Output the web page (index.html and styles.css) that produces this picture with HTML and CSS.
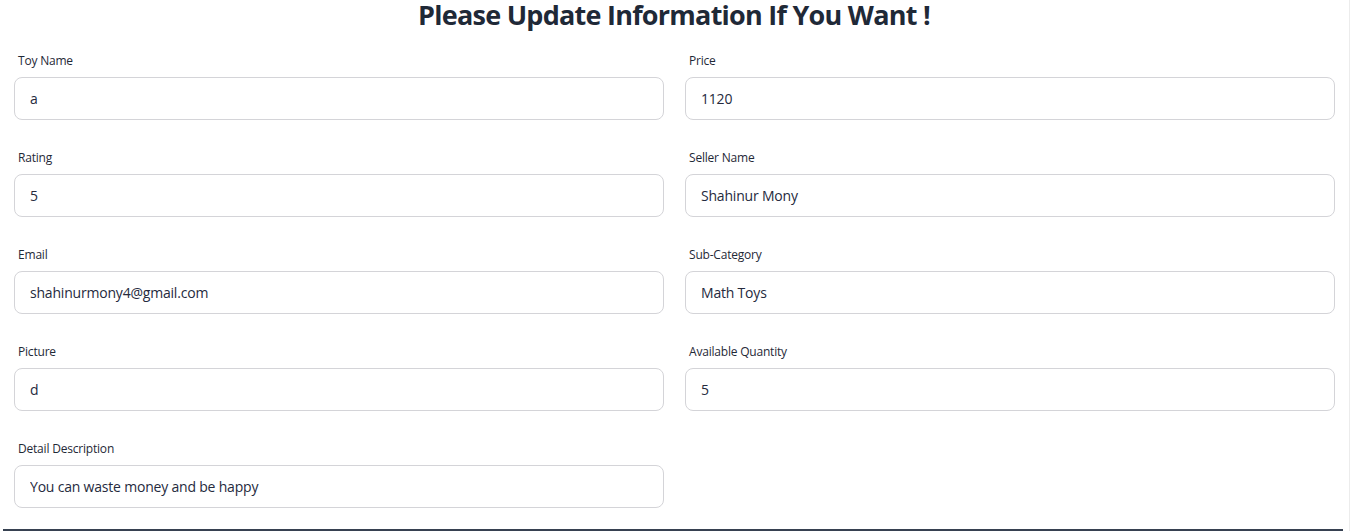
FILE: index.html
```html
<!DOCTYPE html>
<html>
<head>
<meta charset="utf-8">
<link rel="stylesheet" href="styles.css">
</head>
<body>
<div class="page">
  <h1 class="title">Please Update Information If You Want !</h1>
  <form class="form">
    <div class="field"><label class="label">Toy Name</label><input class="input" value="a"></div>
    <div class="field"><label class="label">Price</label><input class="input" value="1120"></div>
    <div class="field"><label class="label">Rating</label><input class="input" value="5"></div>
    <div class="field"><label class="label">Seller Name</label><input class="input" value="Shahinur Mony"></div>
    <div class="field"><label class="label">Email</label><input class="input" value="shahinurmony4@gmail.com"></div>
    <div class="field"><label class="label">Sub-Category</label><input class="input" value="Math Toys"></div>
    <div class="field"><label class="label">Picture</label><input class="input" value="d"></div>
    <div class="field"><label class="label">Available Quantity</label><input class="input" value="5"></div>
    <div class="field"><label class="label">Detail Description</label><input class="input" value="You can waste money and be happy"></div>
  </form>
  <div class="footer"></div>
</div>
</body>
</html>
```
FILE: styles.css
```css
* { box-sizing: border-box; }
html, body { margin: 0; padding: 0; background: #fff; }
body { font-family: "Open Sans", "Noto Sans", sans-serif; color: #1f2937; overflow: hidden; }
.page { width: 1350px; height: 531px; border-right: 1px solid #ececec; }
.title {
  margin: 0 0 13px;
  padding: 0 1px 0 0;
  line-height: 30px;
  text-align: center;
  font-size: 27px;
  letter-spacing: -0.75px;
  font-weight: 700;
  color: #1f2937;
}
.form {
  display: grid;
  grid-template-columns: 650px 650px;
  column-gap: 21px;
  row-gap: 20px;
  padding-left: 14px;
  margin: 0;
}
.field { display: flex; flex-direction: column; }
.label {
  height: 34px;
  display: flex;
  align-items: center;
  padding-left: 4px;
  font-size: 12px;
  letter-spacing: -0.2px;
  color: #1f2937;
}
.input {
  height: 43px;
  width: 100%;
  border: 1px solid #d4d4d8;
  border-radius: 8px;
  padding: 0 15px;
  font-family: inherit;
  font-size: 14px;
  letter-spacing: -0.2px;
  color: #252a3d;
  background: #fff;
  outline: none;
}
.footer {
  margin: 21px 6px 0 3px;
  border-top: 2px solid #374151;
  height: 2px;
}
```
